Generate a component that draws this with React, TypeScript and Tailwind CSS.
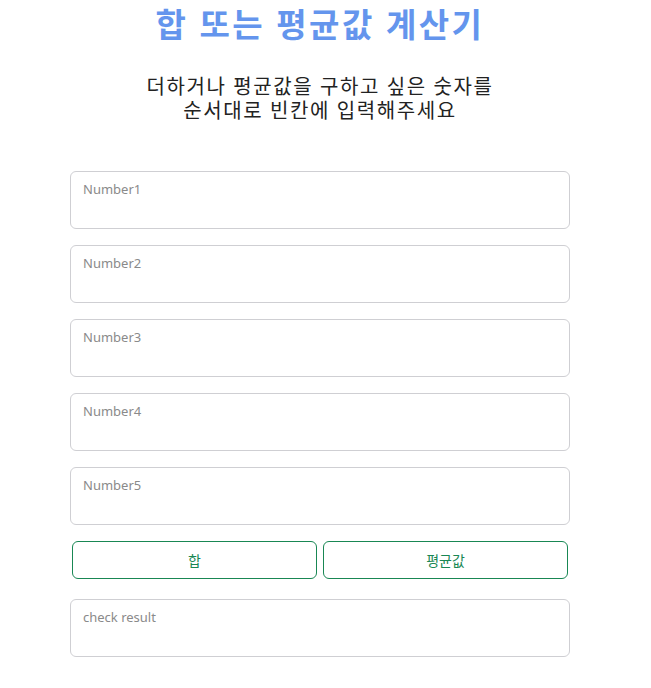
export default function App() {
  const inputs = ["Number1", "Number2", "Number3", "Number4", "Number5"];
  return (
    <div className="w-[640px] bg-white" style={{ fontFamily: '"Noto Sans", "Noto Sans CJK KR", sans-serif' }}>
      <h1 className="text-center text-[33px] font-bold leading-[40px] tracking-[2.5px] text-[#6495ed] pt-[5px]">합 또는 평균값 계산기</h1>
      <p className="mt-[30px] text-center text-[20px] leading-[24px] tracking-[1.6px] text-[#222]">
        <span className="block">더하거나 평균값을 구하고 싶은 숫자를</span>
        <span className="block">순서대로 빈칸에 입력해주세요</span>
      </p>
      <div className="mx-[70px] mt-[48px] flex flex-col gap-[16px]">
        {inputs.map((n) => (
          <textarea
            key={n}
            placeholder={n}
            className="h-[58px] w-full resize-none rounded-[6px] border border-[#cfcfd3] px-[12px] pt-[7px] text-[13px] leading-[20px] text-[#333] placeholder:text-[#8a8a8a] outline-none"
          />
        ))}
        <div className="flex gap-[6px] px-[2px]">
          <button className="h-[38px] flex-1 rounded-[6px] border border-[#198754] text-[14px] text-[#198754]">합</button>
          <button className="h-[38px] flex-1 rounded-[6px] border border-[#198754] text-[14px] text-[#198754]">평균값</button>
        </div>
        <textarea
          placeholder="check result"
          className="mt-[4px] h-[58px] w-full resize-none rounded-[6px] border border-[#cfcfd3] px-[12px] pt-[7px] text-[13px] leading-[20px] text-[#333] placeholder:text-[#8a8a8a] outline-none"
        />
      </div>
    </div>
  );
}
